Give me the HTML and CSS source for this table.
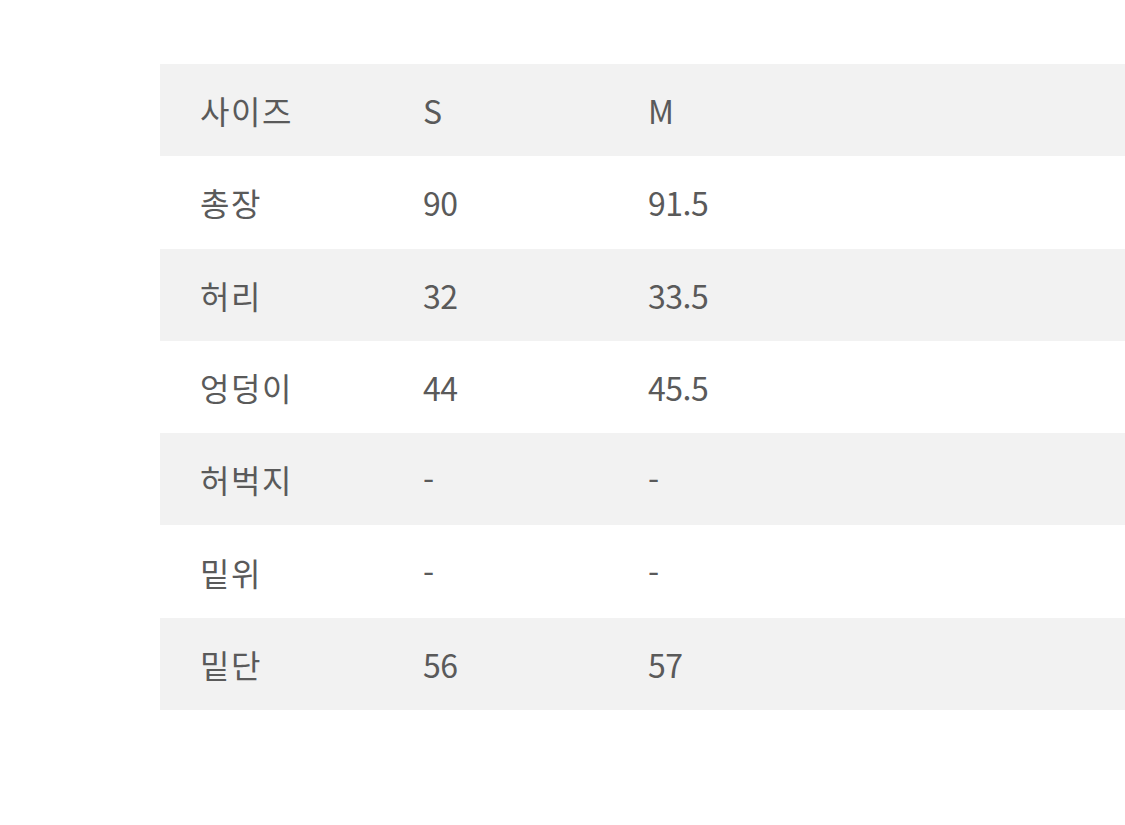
FILE: index.html
```html
<!DOCTYPE html>
<html lang="ko">
<head>
<meta charset="utf-8">
<link rel="stylesheet" href="styles.css">
</head>
<body>
<div class="page">
  <div class="table">
    <div class="row alt"><div class="cell label">사이즈</div><div class="cell">S</div><div class="cell">M</div></div>
    <div class="row"><div class="cell label">총장</div><div class="cell">90</div><div class="cell">91.5</div></div>
    <div class="row alt"><div class="cell label">허리</div><div class="cell">32</div><div class="cell">33.5</div></div>
    <div class="row"><div class="cell label">엉덩이</div><div class="cell">44</div><div class="cell">45.5</div></div>
    <div class="row alt"><div class="cell label">허벅지</div><div class="cell">-</div><div class="cell">-</div></div>
    <div class="row"><div class="cell label">밑위</div><div class="cell">-</div><div class="cell">-</div></div>
    <div class="row alt"><div class="cell label">밑단</div><div class="cell">56</div><div class="cell">57</div></div>
  </div>
</div>
</body>
</html>
```

FILE: styles.css
```css
html, body {
  margin: 0;
  padding: 0;
  background: #ffffff;
  overflow: hidden;
}
.page {
  padding: 64px 0 0 160px;
}
.table {
  display: flex;
  flex-direction: column;
  font-family: "Noto Sans CJK KR", "Noto Sans", sans-serif;
  font-size: 32px;
  font-weight: 400;
  color: #5a5a5a;
}
.row {
  display: grid;
  grid-template-columns: 223px 225px 1fr;
  height: 92.3px;
  align-items: center;
  padding-left: 40px;
}
.row.alt {
  background: #f2f2f2;
}
.cell {
  line-height: 1;
  letter-spacing: -0.5px;
}
.cell.label {
  letter-spacing: 1.5px;
}
```
